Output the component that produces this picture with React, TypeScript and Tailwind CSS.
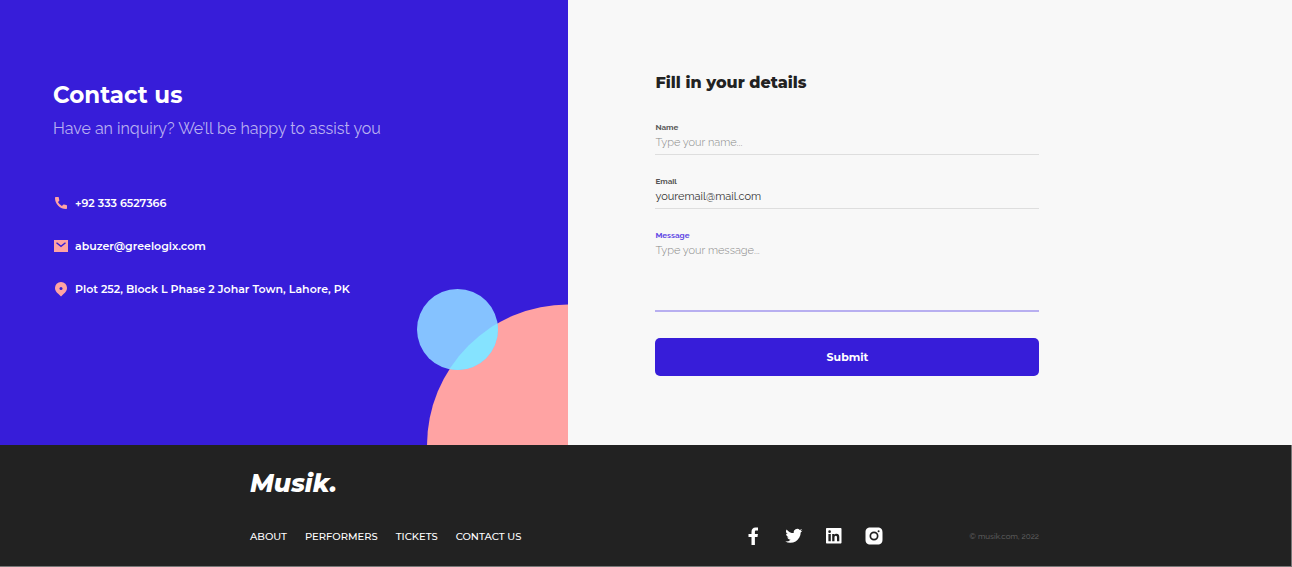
import type { ReactNode } from 'react';

const heading = "font-[Montserrat,Inter,sans-serif]";
const copy = "font-[Raleway,'Open_Sans',sans-serif]";

function PhoneIcon() {
  return (
    <svg viewBox="0 1 14 14" className="size-[14px]" fill="#ffa3a3" aria-hidden="true">
      <path d="M1 2c0-.6.4-1 1-1h2.200c.4 0 .7.3.7.7 0 .9.1 1.700.4 2.400.1.3 0 .6-.2.8L3.900 6.100a10 10 0 0 0 4 4l1.300-1.300c.2-.2.5-.3.8-.2.7.3 1.500.4 2.300.4.4 0 .7.3.7.7V12c0 .6-.4 1-1 1A11 11 0 0 1 1 2Z" />
    </svg>
  );
}

function MailIcon() {
  return (
    <svg viewBox="0 1 14 14" className="size-[14px]" aria-hidden="true">
      <path fill="#ffa3a3" d="M0 1h14v12H0z" />
      <path d="m2.500 3.800 4.500 3.500 4.500-3.500" fill="none" stroke="#371dd9" strokeWidth="1.400" />
    </svg>
  );
}

function PinIcon() {
  return (
    <svg viewBox="0 1 14 16" className="h-4 w-[14px]" aria-hidden="true">
      <path fill="#ffa3a3" d="M7 1a6 6 0 0 1 6 6.300c0 2.200-1.300 4.200-3.500 5.700L7 15.500 4.500 13C2.300 11.500 1 9.500 1 7.300A6 6 0 0 1 7 1Z" />
      <circle cx="7" cy="7.500" r="1.500" fill="#371dd9" />
    </svg>
  );
}

function ContactRow({ icon, children }: { icon: ReactNode; children: ReactNode }) {
  return (
    <li className="flex h-[19px] items-center gap-[7px]">
      {icon}
      <span>{children}</span>
    </li>
  );
}

const socials = [
  {
    name: 'Facebook',
    d: 'M6.500 18v-8H3.500V7h3V5c0-3 1.500-4.500 4-4.500h2.500v3H11.200c-1 0-1.300.5-1.300 1.400V7h3l-.4 3h-2.600v8Z',
  },
  {
    name: 'Twitter',
    d: 'M17.500 3.400c-.6.300-1.300.5-2 .6.700-.4 1.200-1.100 1.500-1.900-.7.400-1.400.7-2.200.8a3.500 3.500 0 0 0-6 3.200A9.900 9.900 0 0 1 1.600 2.400a3.500 3.500 0 0 0 1.100 4.700c-.6 0-1.100-.2-1.600-.4 0 1.700 1.200 3.200 2.800 3.500-.5.100-1 .2-1.600.1.400 1.400 1.700 2.400 3.300 2.400A7 7 0 0 1 .2 14.500a10.400 10.400 0 0 0 15.500-9.100c.7-.5 1.300-1.200 1.800-2Z',
  },
  {
    name: 'LinkedIn',
    d: 'M2 1h13.500c.6 0 1 .4 1 1v13.500c0 .6-.4 1-1 1H2c-.6 0-1-.4-1-1V2c0-.6.400-1 1-1ZM3.400 6.900v7.300h2.400V6.900H3.400Zm1.200-3.600a1.350 1.350 0 1 0 0 2.700 1.350 1.350 0 0 0 0-2.700ZM7.200 6.900v7.300h2.300v-3.600c0-1 .3-1.800 1.300-1.800s1.200.9 1.200 1.800v3.600h2.300v-4c0-2-.6-3.500-2.800-3.500-1 0-1.700.6-2 1.200v-1H7.200Z',
  },
  {
    name: 'Instagram',
    d: 'M5.500.5h7c3.500 0 5 1.500 5 5v7c0 3.500-1.500 5-5 5h-7c-3.500 0-5-1.500-5-5v-7c0-3.500 1.500-5 5-5ZM9 4.500a4.500 4.500 0 1 0 0 9 4.500 4.500 0 0 0 0-9Zm0 1.700a2.800 2.800 0 1 1 0 5.600 2.800 2.800 0 0 1 0-5.600Zm4.600-2.900a1 1 0 1 0 0 2 1 1 0 0 0 0-2Z',
  },
];

export default function App() {
  return (
    <div className="flex min-h-screen flex-col bg-[#f8f8f8]">
      <main className="flex grow">
        <section className={`relative w-[44%] overflow-hidden bg-[#371dd9] pt-[79px] pl-[53px] text-white ${heading}`}>
          <svg viewBox="0 0 151 156" className="absolute right-0 bottom-0 h-[156px] w-[151px]" aria-hidden="true">
            <defs>
              <clipPath id="disc"><circle cx="40.500" cy="40.500" r="40.500" /></clipPath>
            </defs>
            <circle cx="151" cy="156.500" r="141" fill="#ffa3a3" />
            <circle cx="40.500" cy="40.500" r="40.500" fill="#85c2ff" />
            <circle cx="151" cy="156.500" r="141" fill="#85e3ff" clipPath="url(#disc)" />
          </svg>
          <h1 className="text-[23px] leading-8 font-bold">Contact us</h1>
          <p className={`mt-1.5 text-base leading-6 text-[#b9b0f1] ${copy}`}>
            Have an inquiry? We’ll be happy to assist you
          </p>
          <ul className="mt-[53px] flex flex-col gap-6 pl-px text-[11px] font-semibold">
            <ContactRow icon={<PhoneIcon />}>+92 333 6527366</ContactRow>
            <ContactRow icon={<MailIcon />}>abuzer@greelogix.com</ContactRow>
            <ContactRow icon={<PinIcon />}>Plot 252, Block L Phase 2 Johar Town, Lahore, PK</ContactRow>
          </ul>
        </section>

        <section className="grow px-[87px] pt-[71px] pb-[69px]">
          <form className={`flex w-full max-w-96 flex-col ${copy}`} onSubmit={(e) => e.preventDefault()}>
            <h2 className={`text-base leading-6 font-extrabold text-[#222] ${heading}`}>Fill in your details</h2>
            <label htmlFor="name" className="mt-[26px] text-[8px] leading-3 font-bold text-[#555]">Name</label>
            <input id="name" placeholder="Type your name..." className="h-[22px] border-b border-[#dedede] pb-0.5 text-[11px] leading-4 font-light text-[#222] outline-none placeholder:text-[#888]" />
            <label htmlFor="email" className="mt-5 text-[8px] leading-3 font-bold text-[#555]">Email</label>
            <input id="email" type="email" defaultValue="youremail@mail.com" className="h-[22px] border-b border-[#dedede] pb-0.5 text-[11px] leading-4 text-[#333] outline-none" />
            <label htmlFor="message" className="mt-5 text-[8px] leading-3 font-bold text-[#6047e4]">Message</label>
            <textarea id="message" placeholder="Type your message..." className="h-[71px] resize-none border-b-2 border-[#b8aff0] pt-0.5 text-[11px] leading-4 font-light text-[#222] outline-none placeholder:text-[#888]" />
            <button type="submit" className={`mt-[26px] h-[38px] rounded-[5px] bg-[#371dd9] text-[11px] font-bold text-white ${heading}`}>Submit</button>
          </form>
        </section>
      </main>

      <footer className={`border-r border-b border-[#777] bg-[#222] pt-[22px] pr-[252px] pb-5 pl-[250px] text-white ${heading}`}>
        <div className="text-[25px] leading-8 font-extrabold italic">Musik.</div>
        <div className="mt-[27px] flex h-5 items-center">
          <nav className="flex grow gap-[18px] text-[10px] font-medium whitespace-nowrap">
            <a href="#about">ABOUT</a>
            <a href="#performers">PERFORMERS</a>
            <a href="#tickets">TICKETS</a>
            <a href="#contact">CONTACT US</a>
          </nav>
          <div className="flex gap-[22px]">
            {socials.map((s) => (
              <a key={s.name} href={`#${s.name.toLowerCase()}`} aria-label={s.name}>
                <svg viewBox="0 0 18 18" className="size-[18px]" fill="#fff" fillRule="evenodd" aria-hidden="true">
                  <path d={s.d} />
                </svg>
              </a>
            ))}
          </div>
          <small className={`w-[156px] text-right text-[8px] text-[#666] ${copy}`}>© musik.com, 2022</small>
        </div>
      </footer>
    </div>
  );
}
